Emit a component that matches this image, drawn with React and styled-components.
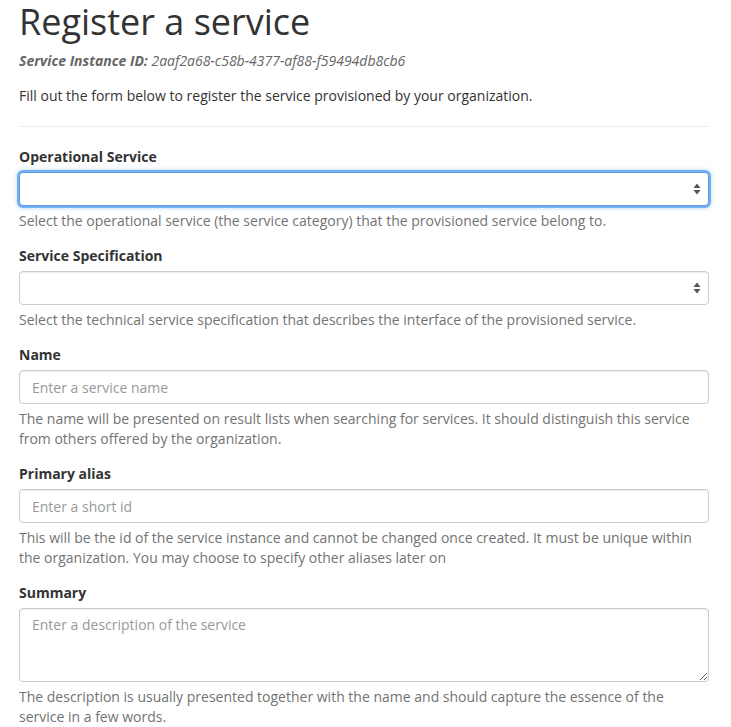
import React from 'react';
import styled, { createGlobalStyle } from 'styled-components';

const GlobalStyle = createGlobalStyle`
  html, body {
    margin: 0;
    padding: 0;
    background: #fff;
  }
  body {
    font-family: 'Open Sans', 'Liberation Sans', sans-serif;
    font-size: 14px;
    line-height: 20px;
    color: #333;
  }
  * { box-sizing: border-box; }
`;

const Page = styled.div`
  width: 709px;
  padding-left: 19px;
`;

const Title = styled.h1`
  margin: 0;
  padding-top: 2px;
  font-size: 36px;
  font-weight: 400;
  line-height: 40px;
  color: #333;
`;

const InstanceId = styled.p`
  margin: 9px 0 0;
  font-style: italic;
  font-size: 14px;
  color: #666;

  strong {
    font-weight: 700;
  }
`;

const Lead = styled.p`
  margin: 15px 0 0;
`;

const Divider = styled.hr`
  margin: 20px 0 20px;
  border: 0;
  border-top: 1px solid #eee;
`;

const Group = styled.div`
  margin-bottom: 15px;
`;

const Label = styled.label`
  display: block;
  margin-bottom: 5px;
  font-weight: 700;
`;

const SelectWrap = styled.div`
  position: relative;
`;

const baseField = `
  display: block;
  width: 100%;
  padding: 6px 12px;
  font-family: 'Open Sans', 'Liberation Sans', sans-serif;
  font-size: 14px;
  line-height: 20px;
  color: #555;
  background: #fff;
  border: 1px solid #ccc;
  border-radius: 4px;
  box-shadow: inset 0 1px 1px rgba(0, 0, 0, 0.075);
  outline: none;

  &::placeholder {
    color: #999;
  }
`;

const Select = styled.select`
  ${baseField}
  height: 34px;
  appearance: none;
  ${({ $focused }) =>
    $focused &&
    `
    border-color: #5a9fe6;
    box-shadow: 0 0 0 2px rgba(100, 165, 240, 0.85), 0 0 4px 2px rgba(102, 175, 233, 0.5);
  `}
`;

const Arrows = styled.svg`
  position: absolute;
  right: 8px;
  top: 11px;
  width: 8px;
  height: 12px;
  pointer-events: none;
`;

const Input = styled.input`
  ${baseField}
  height: 34px;
`;

const TextArea = styled.textarea`
  ${baseField}
  height: 74px;
  resize: vertical;
`;

const Help = styled.p`
  margin: 5px 0 10px;
  color: #737373;
`;

const UpDown = () => (
  <Arrows viewBox="0 0 8 12">
    <path d="M4 0.5 L7.5 5 L0.5 5 Z" fill="#555" />
    <path d="M4 11.5 L7.5 7 L0.5 7 Z" fill="#555" />
  </Arrows>
);

export default function App() {
  return (
    <Page>
      <GlobalStyle />
      <Title>Register a service</Title>
      <InstanceId>
        <strong>Service Instance ID:</strong> 2aaf2a68-c58b-4377-af88-f59494db8cb6
      </InstanceId>
      <Lead>Fill out the form below to register the service provisioned by your organization.</Lead>
      <Divider />

      <Group>
        <Label>Operational Service</Label>
        <SelectWrap>
          <Select $focused>
            <option></option>
          </Select>
          <UpDown />
        </SelectWrap>
        <Help>Select the operational service (the service category) that the provisioned service belong to.</Help>
      </Group>

      <Group>
        <Label>Service Specification</Label>
        <SelectWrap>
          <Select>
            <option></option>
          </Select>
          <UpDown />
        </SelectWrap>
        <Help>Select the technical service specification that describes the interface of the provisioned service.</Help>
      </Group>

      <Group>
        <Label>Name</Label>
        <Input placeholder="Enter a service name" />
        <Help>
          The name will be presented on result lists when searching for services. It should distinguish this service
          from others offered by the organization.
        </Help>
      </Group>

      <Group>
        <Label>Primary alias</Label>
        <Input placeholder="Enter a short id" />
        <Help>
          This will be the id of the service instance and cannot be changed once created. It must be unique within
          the organization. You may choose to specify other aliases later on
        </Help>
      </Group>

      <Group>
        <Label>Summary</Label>
        <TextArea placeholder="Enter a description of the service" />
        <Help>
          The description is usually presented together with the name and should capture the essence of the
          service in a few words.
        </Help>
      </Group>
    </Page>
  );
}
